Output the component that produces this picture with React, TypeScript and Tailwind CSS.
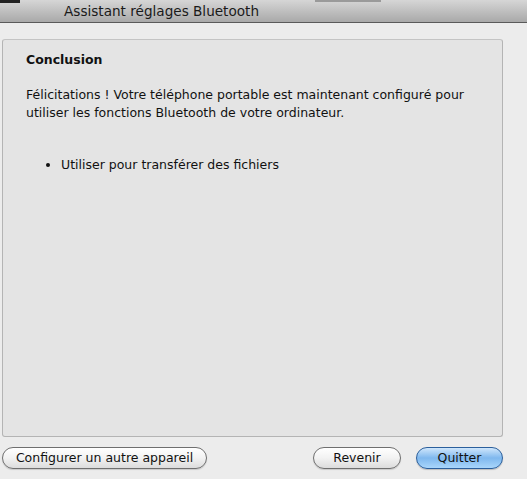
export default function App() {
  const font = { fontFamily: '"DejaVu Sans", "Noto Sans", sans-serif' };
  return (
    <div className="w-[527px] h-[479px] bg-[#ececec] flex flex-col overflow-hidden text-[#111]" style={font}>
      <div className="h-[23px] shrink-0 relative bg-gradient-to-b from-[#d6d6d6] to-[#a9a9a9] border-b border-[#5a5a5a] flex items-end">
        <div className="absolute left-0 top-0 w-[20px] h-[3px] bg-[#222]" />
        <div className="absolute left-[315px] top-0 w-[66px] h-[2px] bg-[#9a9a9a]" />
        <span className="ml-[64px] mb-[2px] text-[13.6px] leading-[18px] text-[#1a1a1a]">Assistant réglages Bluetooth</span>
      </div>
      <div className="flex-1 flex flex-col px-[2px] pt-[16px]">
        <div className="w-[501px] h-[398px] bg-[#e4e4e4] border border-[#b4b4b4] border-t-[#c4c4c4] rounded-[3px] pl-[23px] pt-[11px]">
          <div className="font-bold text-[12.5px] leading-[18px]">Conclusion</div>
          <p className="mt-[17px] text-[12.5px] leading-[18px] w-[460px]">
            Félicitations ! Votre téléphone portable est maintenant configuré pour utiliser les fonctions Bluetooth de votre ordinateur.
          </p>
          <ul className="mt-[34px] text-[12.5px] leading-[18px] list-disc pl-[35px]">
            <li>Utiliser pour transférer des fichiers</li>
          </ul>
        </div>
        <div className="flex items-center mt-[10px] w-[501px]">
          <button className="h-[22px] w-[205px] rounded-full border border-[#6f6f6f] bg-gradient-to-b from-[#ffffff] via-[#f2f2f2] to-[#dcdcdc] text-[12.5px] leading-[18px] shadow-[0_1px_1px_rgba(0,0,0,0.15)]">
            Configurer un autre appareil
          </button>
          <div className="flex-1" />
          <button className="h-[22px] w-[88px] rounded-full border border-[#6f6f6f] bg-gradient-to-b from-[#ffffff] via-[#f2f2f2] to-[#dcdcdc] text-[12.5px] leading-[18px] shadow-[0_1px_1px_rgba(0,0,0,0.15)]">
            Revenir
          </button>
          <button className="ml-[15px] h-[22px] w-[87px] rounded-full border border-[#2b5f9c] bg-gradient-to-b from-[#cfe6fb] via-[#7fb8ee] to-[#a9d6fb] text-[12.5px] leading-[18px] shadow-[0_1px_1px_rgba(0,0,0,0.2)]">
            Quitter
          </button>
        </div>
      </div>
    </div>
  );
}
